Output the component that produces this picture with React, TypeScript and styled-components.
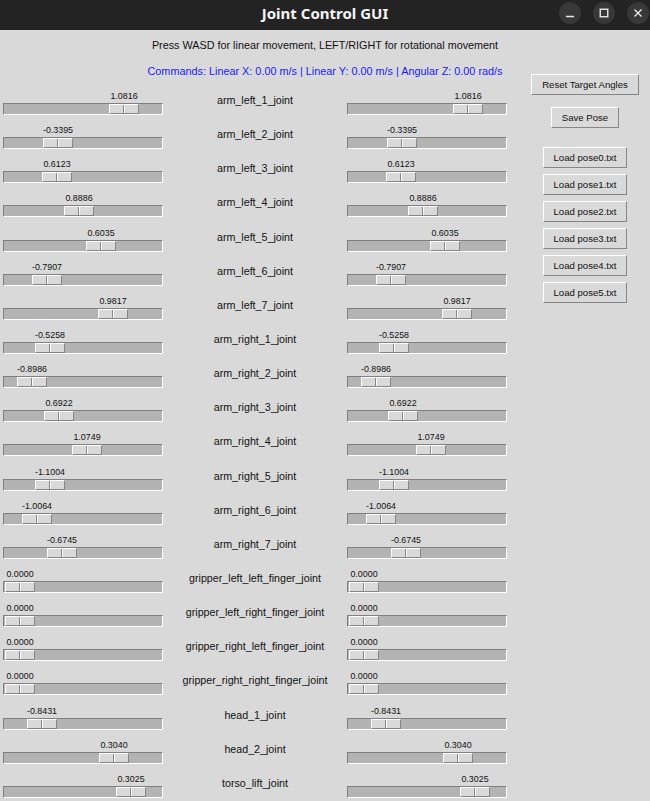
import { Fragment } from "react";
import styled, { createGlobalStyle } from "styled-components";

const GlobalStyle = createGlobalStyle`
  html, body {
    margin: 0;
    padding: 0;
  }
  body {
    width: 650px;
    height: 801px;
    overflow: hidden;
    background: #d9d9d9;
    font-family: "Liberation Sans", Arial, sans-serif;
  }
`;

const Window = styled.div`
  display: flex;
  flex-direction: column;
  width: 650px;
  height: 801px;
  overflow: hidden;
  background: #d9d9d9;
`;

const TitleBar = styled.div`
  flex-shrink: 0;
  box-sizing: border-box;
  height: 30px;
  padding-bottom: 4px;
  display: grid;
  grid-template-columns: 1fr auto 1fr;
  align-items: center;
  background: #232323;
`;

const TitleText = styled.div`
  grid-column: 2;
  font-family: "Noto Sans", "DejaVu Sans", sans-serif;
  font-weight: 700;
  font-size: 15px;
  color: #f4f4f4;
`;

const WindowControls = styled.div`
  grid-column: 3;
  justify-self: end;
  display: flex;
  gap: 12px;
  padding-right: 1px;
`;

const ControlButton = styled.div`
  width: 22px;
  height: 22px;
  border-radius: 50%;
  background: #383838;
  display: flex;
  align-items: center;
  justify-content: center;
`;

const Content = styled.div`
  display: grid;
  grid-template-columns: 507px 1fr;
  grid-template-rows: auto auto 1fr;
`;

const Instruction = styled.div`
  grid-column: 1 / -1;
  grid-row: 1;
  padding-top: 8px;
  text-align: center;
  font-size: 10.8px;
  line-height: 14px;
  color: #111111;
`;

const Commands = styled.div`
  grid-column: 1 / -1;
  grid-row: 2;
  padding: 12px 0 8px;
  text-align: center;
  font-size: 10.85px;
  line-height: 14px;
  color: #1a1aff;
`;

const JointTable = styled.div`
  grid-column: 1;
  grid-row: 3;
  display: grid;
  grid-template-columns: 160px 184px 160px;
  grid-auto-rows: 34.15px;
  padding-left: 3px;
`;

const JointName = styled.div`
  padding-top: 7px;
  text-align: center;
  font-size: 10.7px;
  line-height: 14px;
  color: #111111;
  white-space: nowrap;
`;

const Scale = styled.div`
  width: 160px;
  padding-top: 3px;
`;

const ValueRow = styled.div`
  position: relative;
  height: 14px;
`;

const Value = styled.span`
  position: absolute;
  top: 0;
  transform: translateX(-50%);
  font-size: 8.9px;
  line-height: 14px;
  color: #111111;
  white-space: nowrap;
`;

const Trough = styled.div`
  position: relative;
  box-sizing: border-box;
  height: 12px;
  border: 1px solid;
  border-color: #808080 #ffffff #ffffff #808080;
  background: #b3b3b3;
`;

const Handle = styled.div`
  position: absolute;
  top: 0;
  bottom: 0;
  width: 30px;
  box-sizing: border-box;
  background: #d9d9d9;
  border: 1px solid;
  border-color: #ffffff #868686 #868686 #ffffff;

  &::after {
    content: "";
    position: absolute;
    top: 0;
    bottom: 0;
    left: 13px;
    width: 0;
    border-left: 1px solid #868686;
    border-right: 1px solid #ffffff;
  }
`;

const Panel = styled.div`
  grid-column: 2;
  grid-row: 2 / 4;
  display: flex;
  flex-direction: column;
  align-items: center;
  padding: 22px 0 0 13px;
`;

const LoadList = styled.div`
  display: flex;
  flex-direction: column;
  align-items: center;
  gap: 6px;
  margin-top: 19px;
`;

const TkButton = styled.button<{ $spaceBefore?: number }>`
  box-sizing: border-box;
  height: 21px;
  margin: ${(p) => p.$spaceBefore ?? 0}px 0 0;
  padding: 0 10px;
  background: #d9d9d9;
  border: 1px solid;
  border-color: #ffffff #868686 #868686 #ffffff;
  font-family: "Liberation Sans", Arial, sans-serif;
  font-size: 9.6px;
  color: #111111;
  white-space: nowrap;
  cursor: pointer;
`;

type Joint = { name: string; value: string; pos: number };

// pos = handle offset (px) from the trough's left edge
const joints: Joint[] = [
  { name: "arm_left_1_joint", value: "1.0816", pos: 106 },
  { name: "arm_left_2_joint", value: "-0.3395", pos: 40 },
  { name: "arm_left_3_joint", value: "0.6123", pos: 39 },
  { name: "arm_left_4_joint", value: "0.8886", pos: 61 },
  { name: "arm_left_5_joint", value: "0.6035", pos: 83 },
  { name: "arm_left_6_joint", value: "-0.7907", pos: 29 },
  { name: "arm_left_7_joint", value: "0.9817", pos: 95 },
  { name: "arm_right_1_joint", value: "-0.5258", pos: 32 },
  { name: "arm_right_2_joint", value: "-0.8986", pos: 14 },
  { name: "arm_right_3_joint", value: "0.6922", pos: 41 },
  { name: "arm_right_4_joint", value: "1.0749", pos: 69 },
  { name: "arm_right_5_joint", value: "-1.1004", pos: 32 },
  { name: "arm_right_6_joint", value: "-1.0064", pos: 19 },
  { name: "arm_right_7_joint", value: "-0.6745", pos: 44 },
  { name: "gripper_left_left_finger_joint", value: "0.0000", pos: 2 },
  { name: "gripper_left_right_finger_joint", value: "0.0000", pos: 2 },
  { name: "gripper_right_left_finger_joint", value: "0.0000", pos: 2 },
  { name: "gripper_right_right_finger_joint", value: "0.0000", pos: 2 },
  { name: "head_1_joint", value: "-0.8431", pos: 24 },
  { name: "head_2_joint", value: "0.3040", pos: 96 },
  { name: "torso_lift_joint", value: "0.3025", pos: 113 },
];

const poses = [0, 1, 2, 3, 4, 5];

const JointScale = ({ value, pos }: { value: string; pos: number }) => (
  <Scale>
    <ValueRow>
      <Value style={{ left: pos + 15 }}>{value}</Value>
    </ValueRow>
    <Trough>
      <Handle style={{ left: pos - 1 }} />
    </Trough>
  </Scale>
);

const App = () => {
  return (
    <>
      <GlobalStyle />
      <Window>
        <TitleBar>
          <TitleText>Joint Control GUI</TitleText>
          <WindowControls>
            <ControlButton>
              <svg width="10" height="10" viewBox="0 0 10 10">
                <path d="M1 8.5h8" stroke="#e8e8e8" strokeWidth="1.5" />
              </svg>
            </ControlButton>
            <ControlButton>
              <svg width="10" height="10" viewBox="0 0 10 10">
                <rect x="1.25" y="1.25" width="7.5" height="7.5" fill="none" stroke="#e8e8e8" strokeWidth="1.4" />
              </svg>
            </ControlButton>
            <ControlButton>
              <svg width="10" height="10" viewBox="0 0 10 10">
                <path d="M1.5 1.5l7 7M8.5 1.5l-7 7" stroke="#e8e8e8" strokeWidth="1.4" />
              </svg>
            </ControlButton>
          </WindowControls>
        </TitleBar>

        <Content>
          <Instruction>
            Press WASD for linear movement, LEFT/RIGHT for rotational movement
          </Instruction>
          <Commands>
            Commands: Linear X: 0.00 m/s | Linear Y: 0.00 m/s | Angular Z: 0.00 rad/s
          </Commands>

          <JointTable>
            {joints.map((j) => (
              <Fragment key={j.name}>
                <JointScale value={j.value} pos={j.pos} />
                <JointName>{j.name}</JointName>
                <JointScale value={j.value} pos={j.pos} />
              </Fragment>
            ))}
          </JointTable>

          <Panel>
            <TkButton>Reset Target Angles</TkButton>
            <TkButton $spaceBefore={12}>Save Pose</TkButton>
            <LoadList>
              {poses.map((n) => (
                <TkButton key={n}>Load pose{n}.txt</TkButton>
              ))}
            </LoadList>
          </Panel>
        </Content>
      </Window>
    </>
  );
};

export default App;
